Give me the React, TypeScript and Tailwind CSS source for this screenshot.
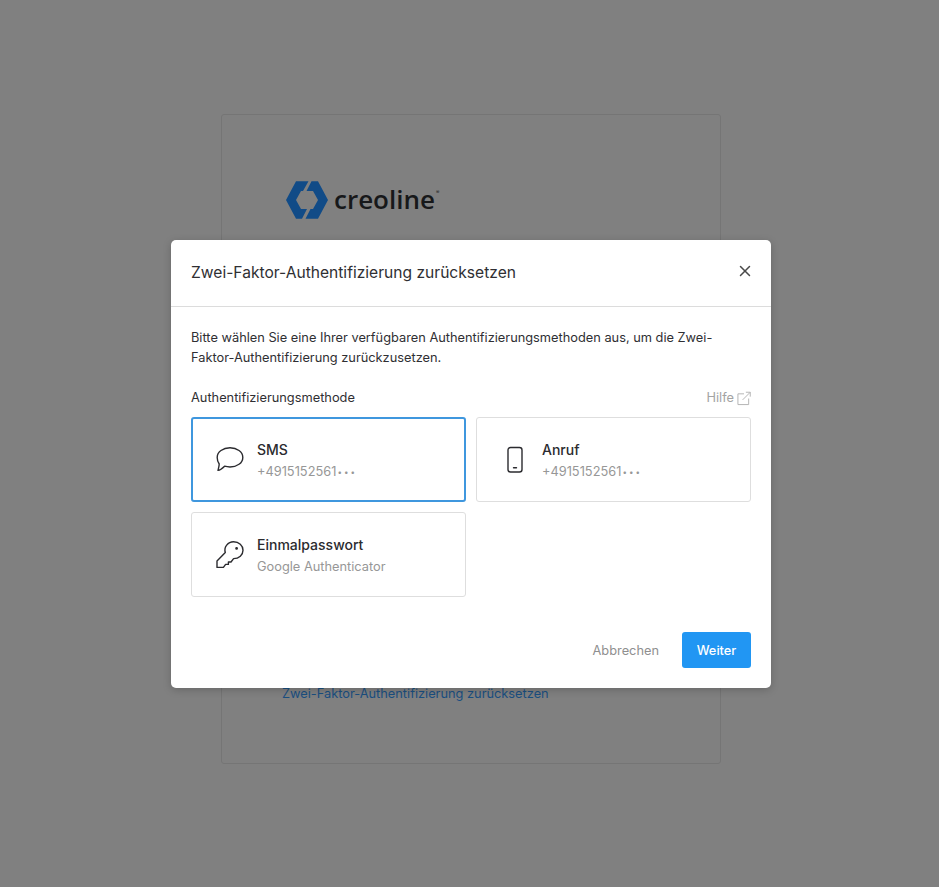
import type { ReactNode } from 'react'
import { X } from 'lucide-react'

function LogoMark() {
  return (
    <svg width="42" height="38" viewBox="0 0 42 38" className="shrink-0">
      <path d="M0 19 L10 0.2 L22.5 0.2 L17 10 L15 10 L10 19 L15 28 L21 28 L16 37.8 L10 37.8 Z" fill="#114b87" />
      <path d="M25.5 0.2 L32 0.2 L42 19 L32 37.8 L19.5 37.8 L24.5 28 L27 28 L32 19 L27 10 L20.5 10 Z" fill="#114b87" />
    </svg>
  )
}

function ChatIcon() {
  return (
    <svg width="28" height="26" viewBox="0 0 28 26" fill="none" stroke="#2b2b2f" strokeWidth="1.4" strokeLinejoin="round">
      <path d="M14 0.8 C21 0.8 26.8 4.8 26.8 10.4 C26.8 16 21 20 14 20 C12 20 10.5 19.8 8.6 19.2 C6.6 21.2 4.5 23 2 23.4 C2.6 21 3.2 19 3.2 17 C1.8 15 1.2 12.8 1.2 10.4 C1.2 4.8 7 0.8 14 0.8 Z" />
    </svg>
  )
}

function PhoneIcon() {
  return (
    <svg width="28" height="28" viewBox="0 0 28 28" fill="none" stroke="#2b2b2f" strokeWidth="1.4" strokeLinecap="round">
      <rect x="7" y="1.5" width="14" height="24.5" rx="2.5" />
      <path d="M12.5 21.8 H15.5" />
    </svg>
  )
}

function KeyIcon() {
  return (
    <svg width="28" height="28" viewBox="0 0 28 28" fill="none" stroke="#2b2b2f" strokeWidth="1.4" strokeLinejoin="round">
      <path d="M17.5 0.8 C23 0.8 27 4.6 27 9.2 C27 14 23 17.6 17.6 17.6 L15 21 L12.4 21 L12.4 23.4 L9.6 23.4 L7.4 26.4 L1 26.4 L1 20 L9.3 11.5 C7.6 6 12 0.8 17.5 0.8 Z" />
      <circle cx="20.6" cy="7.4" r="0.7" fill="#2b2b2f" />
    </svg>
  )
}

function ExternalIcon() {
  return (
    <svg width="14" height="15" viewBox="0 0 15 15" fill="none" stroke="#b0b0b0" strokeWidth="1">
      <path d="M7.5 2.5 H1 V14 H12.5 V7.5" />
      <path d="M6 9 L14 1 M9.5 0.8 H14.2 V5.5" />
    </svg>
  )
}

function MethodCard({ icon, title, sub, selected }: { icon: ReactNode; title: string; sub: ReactNode; selected?: boolean }) {
  return (
    <div
      className={`h-[85px] flex items-center gap-[13px] bg-white rounded-[3px] ${
        selected ? 'border-2 border-[#3f97de] pl-[23px]' : 'border border-[#dedede] pl-[24px]'
      }`}
    >
      <div className="w-[28px] flex justify-center shrink-0">{icon}</div>
      <div className="min-w-0 pt-[3px]">
        <div className="text-[14px] leading-[20px] font-medium text-[#2b2b2f]">{title}</div>
        <div className="mt-[2px] text-[12.8px] leading-[20px] text-[#979797]">{sub}</div>
      </div>
    </div>
  )
}

const phone = (
  <>
    +4915152561<span className="ml-[1px] text-[8px] tracking-[2px] align-[1px]">•••</span>
  </>
)

export default function App() {
  return (
    <div className="relative h-[887px] overflow-hidden bg-[#808080] font-['Inter',sans-serif]">
      <div className="pt-[114px] pl-[221px]">
        <div className="w-[500px] h-[650px] border border-[#757575] rounded-[3px] pt-[66px] pl-[64px]">
          <div className="flex items-center h-[38px]">
            <LogoMark />
            <span className="ml-[6px] -mt-[3px] font-['Open_Sans',sans-serif] text-[26px] leading-[36px] font-semibold text-[#17181a]">creoline</span>
            <span className="ml-[1px] -mt-[16px] text-[5px] leading-[8px] text-[#17181a]">®</span>
          </div>
          <a className="block mt-[465px] -ml-[4px] text-[12.8px] leading-[20px] text-[#1a4f80]">
            Zwei-Faktor-Authentifizierung zurücksetzen
          </a>
        </div>
      </div>

      <div className="absolute left-[171px] top-[240px] w-[600px] h-[448px] bg-white rounded-[5px] shadow-[0_2px_8px_rgba(0,0,0,0.2)]">
        <div className="h-[67px] flex items-center justify-between pl-[20px] pr-[17px] border-b border-[#dcdcdc]">
          <h2 className="text-[15.6px] leading-[24px] font-normal text-[#2f2f33]">Zwei-Faktor-Authentifizierung zurücksetzen</h2>
          <X size={18} strokeWidth={2} className="text-[#4a4a4a] -mt-[4px]" />
        </div>

        <div className="px-[20px] pt-[21px]">
          <p className="text-[12.8px] leading-[20px] text-[#2f2f33]">
            Bitte wählen Sie eine Ihrer verfügbaren Authentifizierungsmethoden aus, um die Zwei-Faktor-Authentifizierung zurückzusetzen.
          </p>
          <div className="mt-[20px] flex items-center justify-between h-[20px]">
            <span className="text-[12.8px] leading-[20px] text-[#2f2f33]">Authentifizierungsmethode</span>
            <span className="flex items-center gap-[3px] text-[12.8px] leading-[20px] text-[#a3a3a3]">
              Hilfe <ExternalIcon />
            </span>
          </div>
          <div className="mt-[9px] grid grid-cols-[275px_275px] gap-x-[10px] gap-y-[10px]">
            <MethodCard icon={<ChatIcon />} title="SMS" sub={phone} selected />
            <MethodCard icon={<PhoneIcon />} title="Anruf" sub={phone} />
            <MethodCard icon={<KeyIcon />} title="Einmalpasswort" sub="Google Authenticator" />
          </div>
          <div className="mt-[35px] flex items-center justify-end gap-[23px]">
            <button type="button" className="pt-[1px] text-[12.8px] font-normal text-[#8f8f8f]">Abbrechen</button>
            <button type="button" className="w-[69px] h-[36px] pt-[1px] rounded-[3px] bg-[#2196f3] text-[12.8px] font-medium text-white">Weiter</button>
          </div>
        </div>
      </div>
    </div>
  )
}
